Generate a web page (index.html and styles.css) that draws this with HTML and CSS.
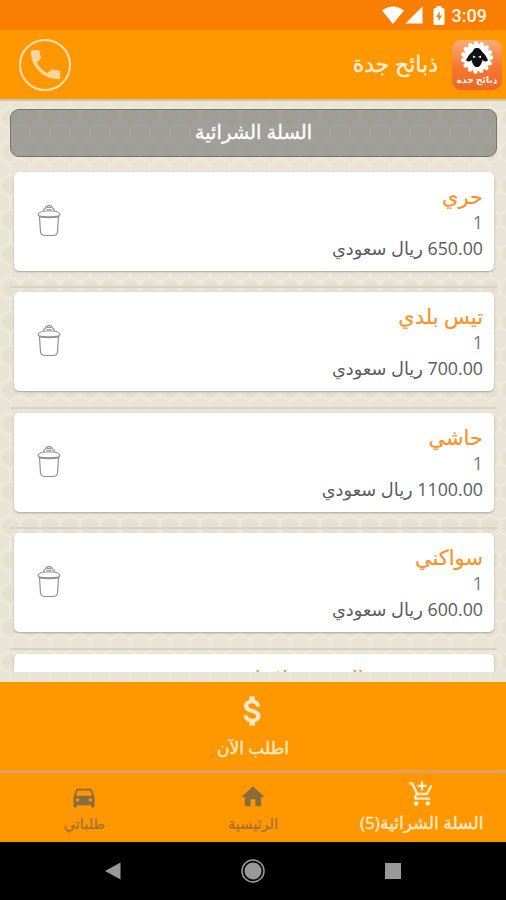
FILE: index.html
```
<!DOCTYPE html>
<html lang="ar" dir="rtl">
<head>
	<meta charset="UTF-8">
	<meta name="viewport" content="width=device-width, initial-scale=1.0">
	<title>ذبائح جدة</title>
	<link rel="stylesheet" href="styles.css">
</head>
<body>
	<!-- shared trash icon -->
	<svg class="sprite" width="0" height="0">
		<symbol id="trash" viewBox="0 0 24 34">
			<path d="M6.500 7L7 5Q8.500 5 9 3Q12 0 15 3Q15.500 5 17 5L17.500 7M10 3.500h4M9.500 5.500h5" stroke-width="1.200"/>
			<path d="M2.500 12.500Q.5 11 1.500 9.500Q3 7.500 7 7H17Q21 7.500 22.500 9.500Q23.500 11 21.500 12.500"/>
			<path d="M2 12.500Q12 14 22 12.500" stroke-width="1.900"/>
			<path d="M2.500 13L3.500 28Q4 31.500 8 31.500H16Q20 31.500 20.500 28L21.500 13"/>
		</symbol>
	</svg>

	<div class="status">
		<span class="time">3:09</span>
		<svg class="battery" width="12" height="19" viewBox="0 0 12 19"><path fill="#fff" fill-rule="evenodd" d="M3.500 0h5v2H10q1.500 0 1.500 1.500v14Q11.500 19 10 19H2Q.5 19 .5 17.500v-14Q.5 2 2 2h1.500zM7 5.500L3 11h2.500v4.500L9 9.500H6.500z"/></svg>
		<svg class="signal" width="18" height="18" viewBox="0 0 18 18"><path fill="#fff" d="M17.500.5v17H.5z"/></svg>
		<svg class="wifi" width="22" height="18" viewBox="0 0 22 18"><path fill="#fff" d="M0 4.500Q11-3.500 22 4.500L11 18z"/></svg>
	</div>

	<header>
		<div class="logo">
			<svg width="34" height="33" viewBox="0 0 34 33">
				<circle cx="17" cy="16.500" r="13.500" fill="#fff"/>
				<circle cx="17" cy="16.500" r="14" fill="none" stroke="#fff" stroke-width="4.500" stroke-linecap="round" stroke-dasharray="0 5.860"/>
				<path fill="#111" d="M13 10Q14 6.500 17 7Q20 6.500 21.500 10Q25 13 28 19Q26 22 22.500 19Q21.500 24 18.500 26H15.500Q12.500 24 11.500 19Q8 22 6 19Q9 13 13 10z"/>
				<path fill="#fff" d="M13 14.500l3 1.500-3 1zM21 14.500L18 16l3 1z"/>
			</svg>
			<span>ذبائح جدة</span>
		</div>
		<h1>ذبائح جدة</h1>
		<a class="call" href="#">
			<svg width="39" height="39" viewBox="0 0 24 24"><path fill="#ffd59a" d="M6.620 10.790c1.440 2.830 3.760 5.140 6.590 6.590l2.200-2.200c.27-.27.67-.36 1.020-.24 1.120.37 2.330.57 3.570.57.55 0 1 .45 1 1V20c0 .55-.45 1-1 1-9.390 0-17-7.610-17-17 0-.55.45-1 1-1h3.500c.55 0 1 .45 1 1 0 1.250.2 2.450.57 3.570.11.35.03.74-.25 1.020z"/></svg>
		</a>
	</header>

	<main>
		<h2>السلة الشرائية</h2>
		<ul>
			<li>
				<div class="card">
					<div class="info"><h3>حري</h3><p class="count">1</p><p>650.00 ريال سعودي</p></div>
					<svg class="trash"><use href="#trash"/></svg>
				</div>
			</li>
			<li>
				<div class="card">
					<div class="info"><h3>تيس بلدي</h3><p class="count">1</p><p>700.00 ريال سعودي</p></div>
					<svg class="trash"><use href="#trash"/></svg>
				</div>
			</li>
			<li>
				<div class="card">
					<div class="info"><h3>حاشي</h3><p class="count">1</p><p>1100.00 ريال سعودي</p></div>
					<svg class="trash"><use href="#trash"/></svg>
				</div>
			</li>
			<li>
				<div class="card">
					<div class="info"><h3>سواكني</h3><p class="count">1</p><p>600.00 ريال سعودي</p></div>
					<svg class="trash"><use href="#trash"/></svg>
				</div>
			</li>
			<li>
				<div class="card">
					<div class="info"><h3>خروف نعيمي المرتفع بلادنا</h3></div>
				</div>
			</li>
		</ul>
	</main>

	<a class="order" href="#">
		<svg width="38" height="38" viewBox="0 0 24 24"><path fill="#ffebce" stroke="#ffebce" stroke-width=".4" d="M11.800 10.900c-2.270-.59-3-1.200-3-2.150 0-1.090 1.010-1.850 2.700-1.850 1.780 0 2.440.85 2.500 2.100h2.210c-.07-1.720-1.120-3.300-3.210-3.810V3h-3v2.160c-1.940.42-3.500 1.680-3.500 3.610 0 2.310 1.910 3.460 4.700 4.130 2.500.6 3 1.480 3 2.410 0 .69-.49 1.790-2.700 1.790-2.060 0-2.870-.92-2.980-2.100h-2.200c.12 2.190 1.760 3.420 3.680 3.830V21h3v-2.150c1.950-.37 3.500-1.500 3.500-3.550 0-2.840-2.430-3.810-4.700-4.400z"/></svg>
		<span>اطلب الآن</span>
	</a>

	<nav class="tabs">
		<a class="active" href="#">
			<svg width="28" height="28" viewBox="0 0 24 24"><path d="M11 9h2V6h3V4h-3V1h-2v3H8v2h3v3zm-4 9c-1.100 0-1.990.9-1.990 2S5.900 22 7 22s2-.9 2-2-.9-2-2-2zm10 0c-1.100 0-1.990.9-1.990 2s.89 2 1.990 2 2-.9 2-2-.9-2-2-2zm-9.830-3.250l.03-.12.9-1.630h7.450c.75 0 1.410-.41 1.750-1.030l3.860-7.010L19.420 4h-.01l-1.100 2-2.760 5H8.530l-.13-.27L6.160 6l-.95-2-.94-2H1v2h2l3.600 7.590-1.350 2.450c-.16.28-.25.61-.25.960 0 1.100.9 2 2 2h12v-2H7.420c-.13 0-.25-.11-.25-.25z"/></svg>
			<span>السلة الشرائية(5)</span>
		</a>
		<a href="#">
			<svg width="28" height="28" viewBox="0 0 24 24"><path d="M10 20v-6h4v6h5v-8h3L12 3 2 12h3v8z"/></svg>
			<span>الرئيسية</span>
		</a>
		<a href="#">
			<svg width="28" height="28" viewBox="0 0 24 24"><path d="M18.920 6.010C18.720 5.420 18.160 5 17.500 5h-11c-.66 0-1.210.42-1.420 1.010L3 12v8c0 .55.45 1 1 1h1c.55 0 1-.45 1-1v-1h12v1c0 .55.45 1 1 1h1c.55 0 1-.45 1-1v-8l-2.080-5.990zM6.500 16c-.83 0-1.500-.67-1.500-1.500S5.670 13 6.500 13s1.500.67 1.500 1.500S7.330 16 6.500 16zm11 0c-.83 0-1.500-.67-1.500-1.500s.67-1.500 1.500-1.500 1.500.67 1.500 1.500-.67 1.500-1.500 1.500zM5 11l1.500-4.500h11L19 11H5z"/></svg>
			<span>طلباتي</span>
		</a>
	</nav>

	<div class="system">
		<svg width="18" height="18" viewBox="0 0 18 18"><path d="M1 1h16v16H1z"/></svg>
		<svg width="26" height="26" viewBox="0 0 26 26"><circle cx="13" cy="13" r="8.500"/><circle class="ring" cx="13" cy="13" r="11"/></svg>
		<svg width="18" height="18" viewBox="0 0 18 18"><path d="M16.500.5v17L1 9z"/></svg>
	</div>
</body>
</html>
```
FILE: styles.css
```
*, *:before, *:after {
	box-sizing: border-box;
}
body {
	display: flex;
	flex-direction: column;
	width: 506px;
	height: 900px;
	margin: 0;
	overflow: hidden;
	font-family: "Open Sans", "DejaVu Sans", sans-serif;
	background: #000;
}
h1, h2, h3, p, ul {
	margin: 0;
	padding: 0;
	font-weight: normal;
}
a {
	color: inherit;
	text-decoration: none;
}
svg {
	display: block;
}
.sprite {
	position: absolute;
}

.status {
	display: flex;
	align-items: center;
	height: 30px;
	flex: none;
	padding-right: 19px;
	background: #f97e02;
}
.time {
	padding-top: 1px;
	font: 500 18px/30px Roboto, sans-serif;
	color: #fff5e8;
}
.battery {
	margin-right: 7px;
}
.signal {
	margin-right: 10px;
}
.wifi {
	margin-right: 1px;
}

header {
	display: flex;
	align-items: center;
	height: 69px;
	flex: none;
	padding: 0 4px 0 19px;
	background: #ff9800;
	color: #fff0dc;
}
.logo {
	display: flex;
	flex-direction: column;
	align-items: center;
	width: 50px;
	height: 50px;
	padding-top: 1px;
	border-radius: 9px;
	background: linear-gradient(#f9ac78, #f37832 55%, #f16524);
}
.logo span {
	font-size: 9px;
	font-weight: bold;
	line-height: 12px;
	color: #fff;
	white-space: nowrap;
}
header h1 {
	margin-right: 14px;
	padding-bottom: 4px;
	font-size: 22px;
	line-height: 30px;
	-webkit-text-stroke: .3px #fff0dc;
}
.call {
	display: flex;
	align-items: center;
	justify-content: center;
	width: 52px;
	height: 52px;
	margin-right: auto;
	border: 2px solid #ffdfb2;
	border-radius: 50%;
}

main {
	height: 583px;
	flex: none;
	padding: 8px 9px 10px 10px;
	border-top: 2px solid #cfc3aa;
	background: #e9e4d6 url("data:image/svg+xml,%3Csvg xmlns='http://www.w3.org/2000/svg' width='20' height='34'%3E%3Cpath d='M10 0v6L20 11v12L10 28v6M10 6L0 11v12l10 5' fill='none' stroke='%23f0ece1' stroke-width='1.2'/%3E%3Cpath d='M10 9l7 4v8l-7 4-7-4v-8z' fill='%23e6e0d1'/%3E%3C/svg%3E");
}
h2 {
	height: 48px;
	border: 1.500px solid #77736b;
	border-radius: 9px;
	background: rgba(112, 112, 110, .6);
	font-size: 19.500px;
	line-height: 43px;
	text-align: center;
	color: #fff;
	-webkit-text-stroke: .3px #fff;
}
ul {
	height: 515px;
	overflow: hidden;
	list-style: none;
}
li {
	height: 120.500px;
	padding: 15px 3px 0 4px;
}
li + li {
	padding-top: 4px;
	border-top: 2px solid #d8d2c4;
}
li:first-child {
	height: 129px;
}
.card {
	display: flex;
	justify-content: space-between;
	height: 99px;
	padding: 11px 11px 0 23px;
	border-radius: 5px;
	background: #fff;
	box-shadow: 0 1px 2px #aaa494;
}
.info {
	color: #5b5b5b;
	font-size: 17.800px;
	line-height: 26px;
}
h3 {
	font-size: 21px;
	line-height: 26px;
	color: #f7932b;
	white-space: nowrap;
	-webkit-text-stroke: .2px #f7932b;
}
.count {
	color: #777;
}
.trash {
	width: 24px;
	height: 34px;
	margin-top: 21px;
	fill: none;
	stroke: #929292;
	stroke-width: 1.200;
}

.order {
	display: flex;
	flex-direction: column;
	align-items: center;
	height: 91px;
	flex: none;
	padding-top: 10px;
	border-bottom: 3px solid #dda166;
	background: #ff9800;
	color: #ffebce;
	font-size: 17px;
	line-height: 36px;
	-webkit-text-stroke: .3px #ffebce;
}

.tabs {
	display: flex;
	height: 69px;
	flex: none;
	background: #ff9800;
	color: #a36f38;
	fill: #8a6c3c;
}
.tabs a {
	display: flex;
	flex-direction: column;
	align-items: center;
	width: 33.333%;
	padding-top: 10px;
	font-size: 14.500px;
	line-height: 26px;
	white-space: nowrap;
	-webkit-text-stroke: .2px #a36f38;
}
.tabs .active {
	padding-top: 7px;
	color: #ffebce;
	fill: #ffebce;
	font-size: 17.200px;
	line-height: 30px;
	-webkit-text-stroke: .3px #ffebce;
}

.system {
	display: flex;
	align-items: center;
	justify-content: space-between;
	height: 58px;
	padding: 0 104px;
	fill: #999;
}
.ring {
	fill: none;
	stroke: #999;
	stroke-width: 1.500;
}
```
